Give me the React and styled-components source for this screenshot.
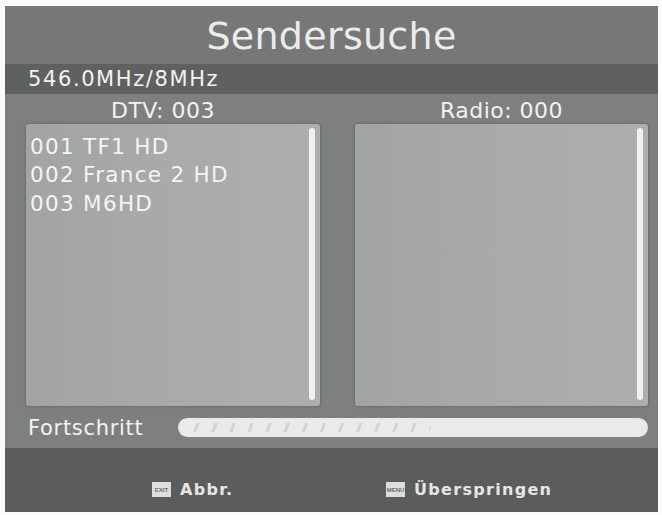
import React from "react";
import styled, { createGlobalStyle } from "styled-components";

const Global = createGlobalStyle`
  html, body { margin: 0; padding: 0; background: #fbfbfb; }
  body { font-family: "DejaVu Sans", "Liberation Sans", sans-serif; }
`;

const Screen = styled.div`
  margin: 6px 4px 0 5px;
  width: 653px;
  height: 506px;
  display: flex;
  flex-direction: column;
  background: #7d7f7f;
  color: #f2f2f2;
`;

const TitleBar = styled.div`
  height: 59px;
  background: #767878;
  display: flex;
  align-items: center;
  justify-content: center;
  font-size: 38px;
  letter-spacing: 0.3px;
  color: #ececec;
  padding-top: 2px;
  box-sizing: border-box;
`;

const FreqBar = styled.div`
  height: 30px;
  background: #5f6161;
  display: flex;
  align-items: center;
  padding-left: 23px;
  font-size: 21px;
  letter-spacing: 1.6px;
`;

const Main = styled.div`
  flex: 1;
  display: flex;
  flex-direction: column;
  padding: 0 10px 0 21px;
  background: #7e8080;
`;

const Columns = styled.div`
  display: grid;
  grid-template-columns: 294px 293px;
  column-gap: 35px;
`;

const Label = styled.div`
  height: 30px;
  display: flex;
  align-items: center;
  justify-content: center;
  font-size: 22px;
  letter-spacing: 0.5px;
  padding-right: ${(p) => p.$shift || 0}px;
  padding-top: 3px;
  box-sizing: border-box;
`;

const Panel = styled.div`
  position: relative;
  height: 282px;
  background: linear-gradient(90deg, #a2a4a4 0%, #a9abab 50%, #acaeac 100%);
  border-radius: 3px;
  box-shadow: 0 0 2px 1px rgba(90, 92, 92, 0.5);
  padding: 9px 0 0 4px;
  box-sizing: border-box;
`;

const Scroll = styled.div`
  position: absolute;
  right: 5px;
  top: 4px;
  bottom: 6px;
  width: 6px;
  border-radius: 3px;
  background: #f0f0f0;
`;

const Channel = styled.div`
  font-size: 21.5px;
  line-height: 28.5px;
  letter-spacing: 1.3px;
  color: #f4f4f4;
`;

const ProgressRow = styled.div`
  height: 40px;
  display: flex;
  align-items: center;
  gap: 30px;
  padding-left: 2px;
  padding-top: 2px;
`;

const ProgressLabel = styled.div`
  font-size: 21px;
  letter-spacing: 0.7px;
  width: 120px;
  flex-shrink: 0;
`;

const Track = styled.div`
  flex: 1;
  height: 19px;
  border-radius: 10px;
  background: #e9ebeb;
  padding: 0 4px;
  box-sizing: border-box;
  display: flex;
  align-items: center;
`;

const Fill = styled.div`
  height: 9px;
  border-radius: 5px;
  background: repeating-linear-gradient(
    110deg,
    transparent 0px,
    transparent 13px,
    #d2d4d4 14px,
    #d2d4d4 16px,
    transparent 17px
  );
`;

const BottomBar = styled.div`
  height: 65px;
  background: #5b5d5d;
  display: flex;
  align-items: center;
  padding: 20px 0 0 147px;
  box-sizing: border-box;
`;

const Hint = styled.div`
  display: flex;
  align-items: center;
  gap: 9px;
  width: ${(p) => (p.$width ? `${p.$width}px` : "auto")};
  font-size: 16px;
  font-weight: bold;
  letter-spacing: 1.3px;
  color: #e6e6e6;
`;

const Key = styled.span`
  width: 19px;
  height: 15px;
  background: #dcdede;
  color: #6a6c6c;
  font-size: 6px;
  font-weight: bold;
  letter-spacing: 0;
  display: flex;
  align-items: center;
  justify-content: center;
  font-family: "Liberation Sans", sans-serif;
`;

const channels = ["001 TF1 HD", "002 France 2 HD", "003 M6HD"];

export default function App() {
  return (
    <>
      <Global />
      <Screen>
        <TitleBar>Sendersuche</TitleBar>
        <FreqBar>546.0MHz/8MHz</FreqBar>
        <Main>
          <Columns>
            <Label $shift={20}>DTV: 003</Label>
            <Label>Radio: 000</Label>
            <Panel>
              {channels.map((c) => (
                <Channel key={c}>{c}</Channel>
              ))}
              <Scroll />
            </Panel>
            <Panel>
              <Scroll />
            </Panel>
          </Columns>
          <ProgressRow>
            <ProgressLabel>Fortschritt</ProgressLabel>
            <Track>
              <Fill style={{ width: "54%" }} />
            </Track>
          </ProgressRow>
        </Main>
        <BottomBar>
          <Hint $width={234}>
            <Key>EXIT</Key>
            Abbr.
          </Hint>
          <Hint>
            <Key>MENU</Key>
            Überspringen
          </Hint>
        </BottomBar>
      </Screen>
    </>
  );
}
